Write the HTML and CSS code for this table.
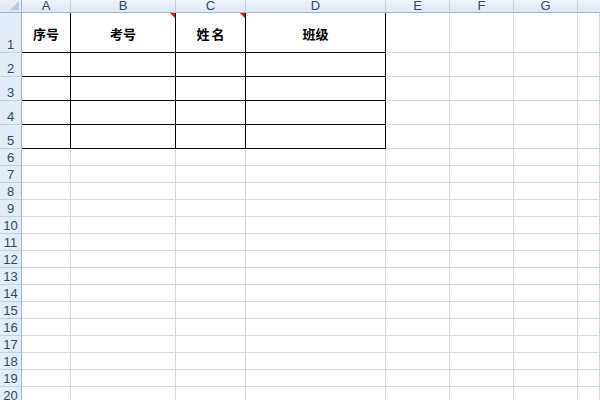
FILE: index.html
```html
<!DOCTYPE html>
<html lang="zh">
<head>
<meta charset="utf-8">
<title>Sheet</title>
<link rel="stylesheet" href="styles.css">
</head>
<body>
<div class="sheet">
  <div class="corner"></div>
  <div class="ch">A</div><div class="ch">B</div><div class="ch">C</div><div class="ch">D</div><div class="ch">E</div><div class="ch">F</div><div class="ch">G</div><div class="ch last"></div>

  <div class="rh">1</div><div class="c b t">序号</div><div class="c b t note">考号</div><div class="c b t note sp">姓名</div><div class="c b t">班级</div><div class="c"></div><div class="c"></div><div class="c"></div><div class="c"></div>
  <div class="rh">2</div><div class="c b"></div><div class="c b"></div><div class="c b"></div><div class="c b"></div><div class="c"></div><div class="c"></div><div class="c"></div><div class="c"></div>
  <div class="rh">3</div><div class="c b"></div><div class="c b"></div><div class="c b"></div><div class="c b"></div><div class="c"></div><div class="c"></div><div class="c"></div><div class="c"></div>
  <div class="rh">4</div><div class="c b"></div><div class="c b"></div><div class="c b"></div><div class="c b"></div><div class="c"></div><div class="c"></div><div class="c"></div><div class="c"></div>
  <div class="rh">5</div><div class="c b"></div><div class="c b"></div><div class="c b"></div><div class="c b"></div><div class="c"></div><div class="c"></div><div class="c"></div><div class="c"></div>
  <div class="rh">6</div><div class="c"></div><div class="c"></div><div class="c"></div><div class="c"></div><div class="c"></div><div class="c"></div><div class="c"></div><div class="c"></div>
  <div class="rh">7</div><div class="c"></div><div class="c"></div><div class="c"></div><div class="c"></div><div class="c"></div><div class="c"></div><div class="c"></div><div class="c"></div>
  <div class="rh">8</div><div class="c"></div><div class="c"></div><div class="c"></div><div class="c"></div><div class="c"></div><div class="c"></div><div class="c"></div><div class="c"></div>
  <div class="rh">9</div><div class="c"></div><div class="c"></div><div class="c"></div><div class="c"></div><div class="c"></div><div class="c"></div><div class="c"></div><div class="c"></div>
  <div class="rh">10</div><div class="c"></div><div class="c"></div><div class="c"></div><div class="c"></div><div class="c"></div><div class="c"></div><div class="c"></div><div class="c"></div>
  <div class="rh">11</div><div class="c"></div><div class="c"></div><div class="c"></div><div class="c"></div><div class="c"></div><div class="c"></div><div class="c"></div><div class="c"></div>
  <div class="rh">12</div><div class="c"></div><div class="c"></div><div class="c"></div><div class="c"></div><div class="c"></div><div class="c"></div><div class="c"></div><div class="c"></div>
  <div class="rh">13</div><div class="c"></div><div class="c"></div><div class="c"></div><div class="c"></div><div class="c"></div><div class="c"></div><div class="c"></div><div class="c"></div>
  <div class="rh">14</div><div class="c"></div><div class="c"></div><div class="c"></div><div class="c"></div><div class="c"></div><div class="c"></div><div class="c"></div><div class="c"></div>
  <div class="rh">15</div><div class="c"></div><div class="c"></div><div class="c"></div><div class="c"></div><div class="c"></div><div class="c"></div><div class="c"></div><div class="c"></div>
  <div class="rh">16</div><div class="c"></div><div class="c"></div><div class="c"></div><div class="c"></div><div class="c"></div><div class="c"></div><div class="c"></div><div class="c"></div>
  <div class="rh">17</div><div class="c"></div><div class="c"></div><div class="c"></div><div class="c"></div><div class="c"></div><div class="c"></div><div class="c"></div><div class="c"></div>
  <div class="rh">18</div><div class="c"></div><div class="c"></div><div class="c"></div><div class="c"></div><div class="c"></div><div class="c"></div><div class="c"></div><div class="c"></div>
  <div class="rh">19</div><div class="c"></div><div class="c"></div><div class="c"></div><div class="c"></div><div class="c"></div><div class="c"></div><div class="c"></div><div class="c"></div>
  <div class="rh">20</div><div class="c"></div><div class="c"></div><div class="c"></div><div class="c"></div><div class="c"></div><div class="c"></div><div class="c"></div><div class="c"></div>
</div>
</body>
</html>
```

FILE: styles.css
```css
html, body {
  margin: 0;
  padding: 0;
  background: #ffffff;
  overflow: hidden;
}

.sheet {
  display: grid;
  grid-template-columns: 22px 49px 105px 70px 140px 64px 64px 64px 1fr;
  grid-template-rows: 13px 40px 24px 24px 24px 24px repeat(15, 17px);
  width: 600px;
  height: 400px;
  overflow: hidden;
  font-family: "Liberation Sans", Arial, sans-serif;
}

.corner {
  position: relative;
  background: linear-gradient(#edf2f9, #dce6f3);
  border-right: 1px solid #9eb6ce;
  border-bottom: 1px solid #9eb6ce;
}
.corner::after {
  content: "";
  position: absolute;
  right: 2px;
  bottom: 2px;
  width: 0;
  height: 0;
  border-left: 9px solid transparent;
  border-bottom: 9px solid #b9c9dc;
}

.ch {
  background: linear-gradient(#f1f5fb, #dfe8f4);
  border-right: 1px solid #c2d0e0;
  border-bottom: 1px solid #9eb6ce;
  color: #2e4a6a;
  font-size: 13px;
  line-height: 11px;
  text-align: center;
  overflow: hidden;
}
.ch.last {
  border-right: none;
}

.rh {
  background: #e4ecf7;
  border-right: 1px solid #9eb6ce;
  border-bottom: 1px solid #c2d0e0;
  color: #2e4a6a;
  font-size: 13px;
  line-height: 14px;
  text-align: center;
  display: flex;
  align-items: flex-end;
  justify-content: center;
  overflow: hidden;
}

.c {
  border-right: 1px solid #d0d7e5;
  border-bottom: 1px solid #d0d7e5;
  position: relative;
}

.c.b {
  border-right-color: #000000;
  border-bottom-color: #000000;
}

.t {
  display: flex;
  align-items: center;
  justify-content: center;
  font-family: "Noto Sans CJK SC", sans-serif;
  font-weight: bold;
  font-size: 13px;
  color: #000000;
  padding-top: 1px;
}

.sp {
  letter-spacing: 2px;
  text-indent: 2px;
}

.note::after {
  content: "";
  position: absolute;
  top: 0;
  right: 0;
  width: 0;
  height: 0;
  border-left: 5px solid transparent;
  border-top: 5px solid #ff0000;
}
```
